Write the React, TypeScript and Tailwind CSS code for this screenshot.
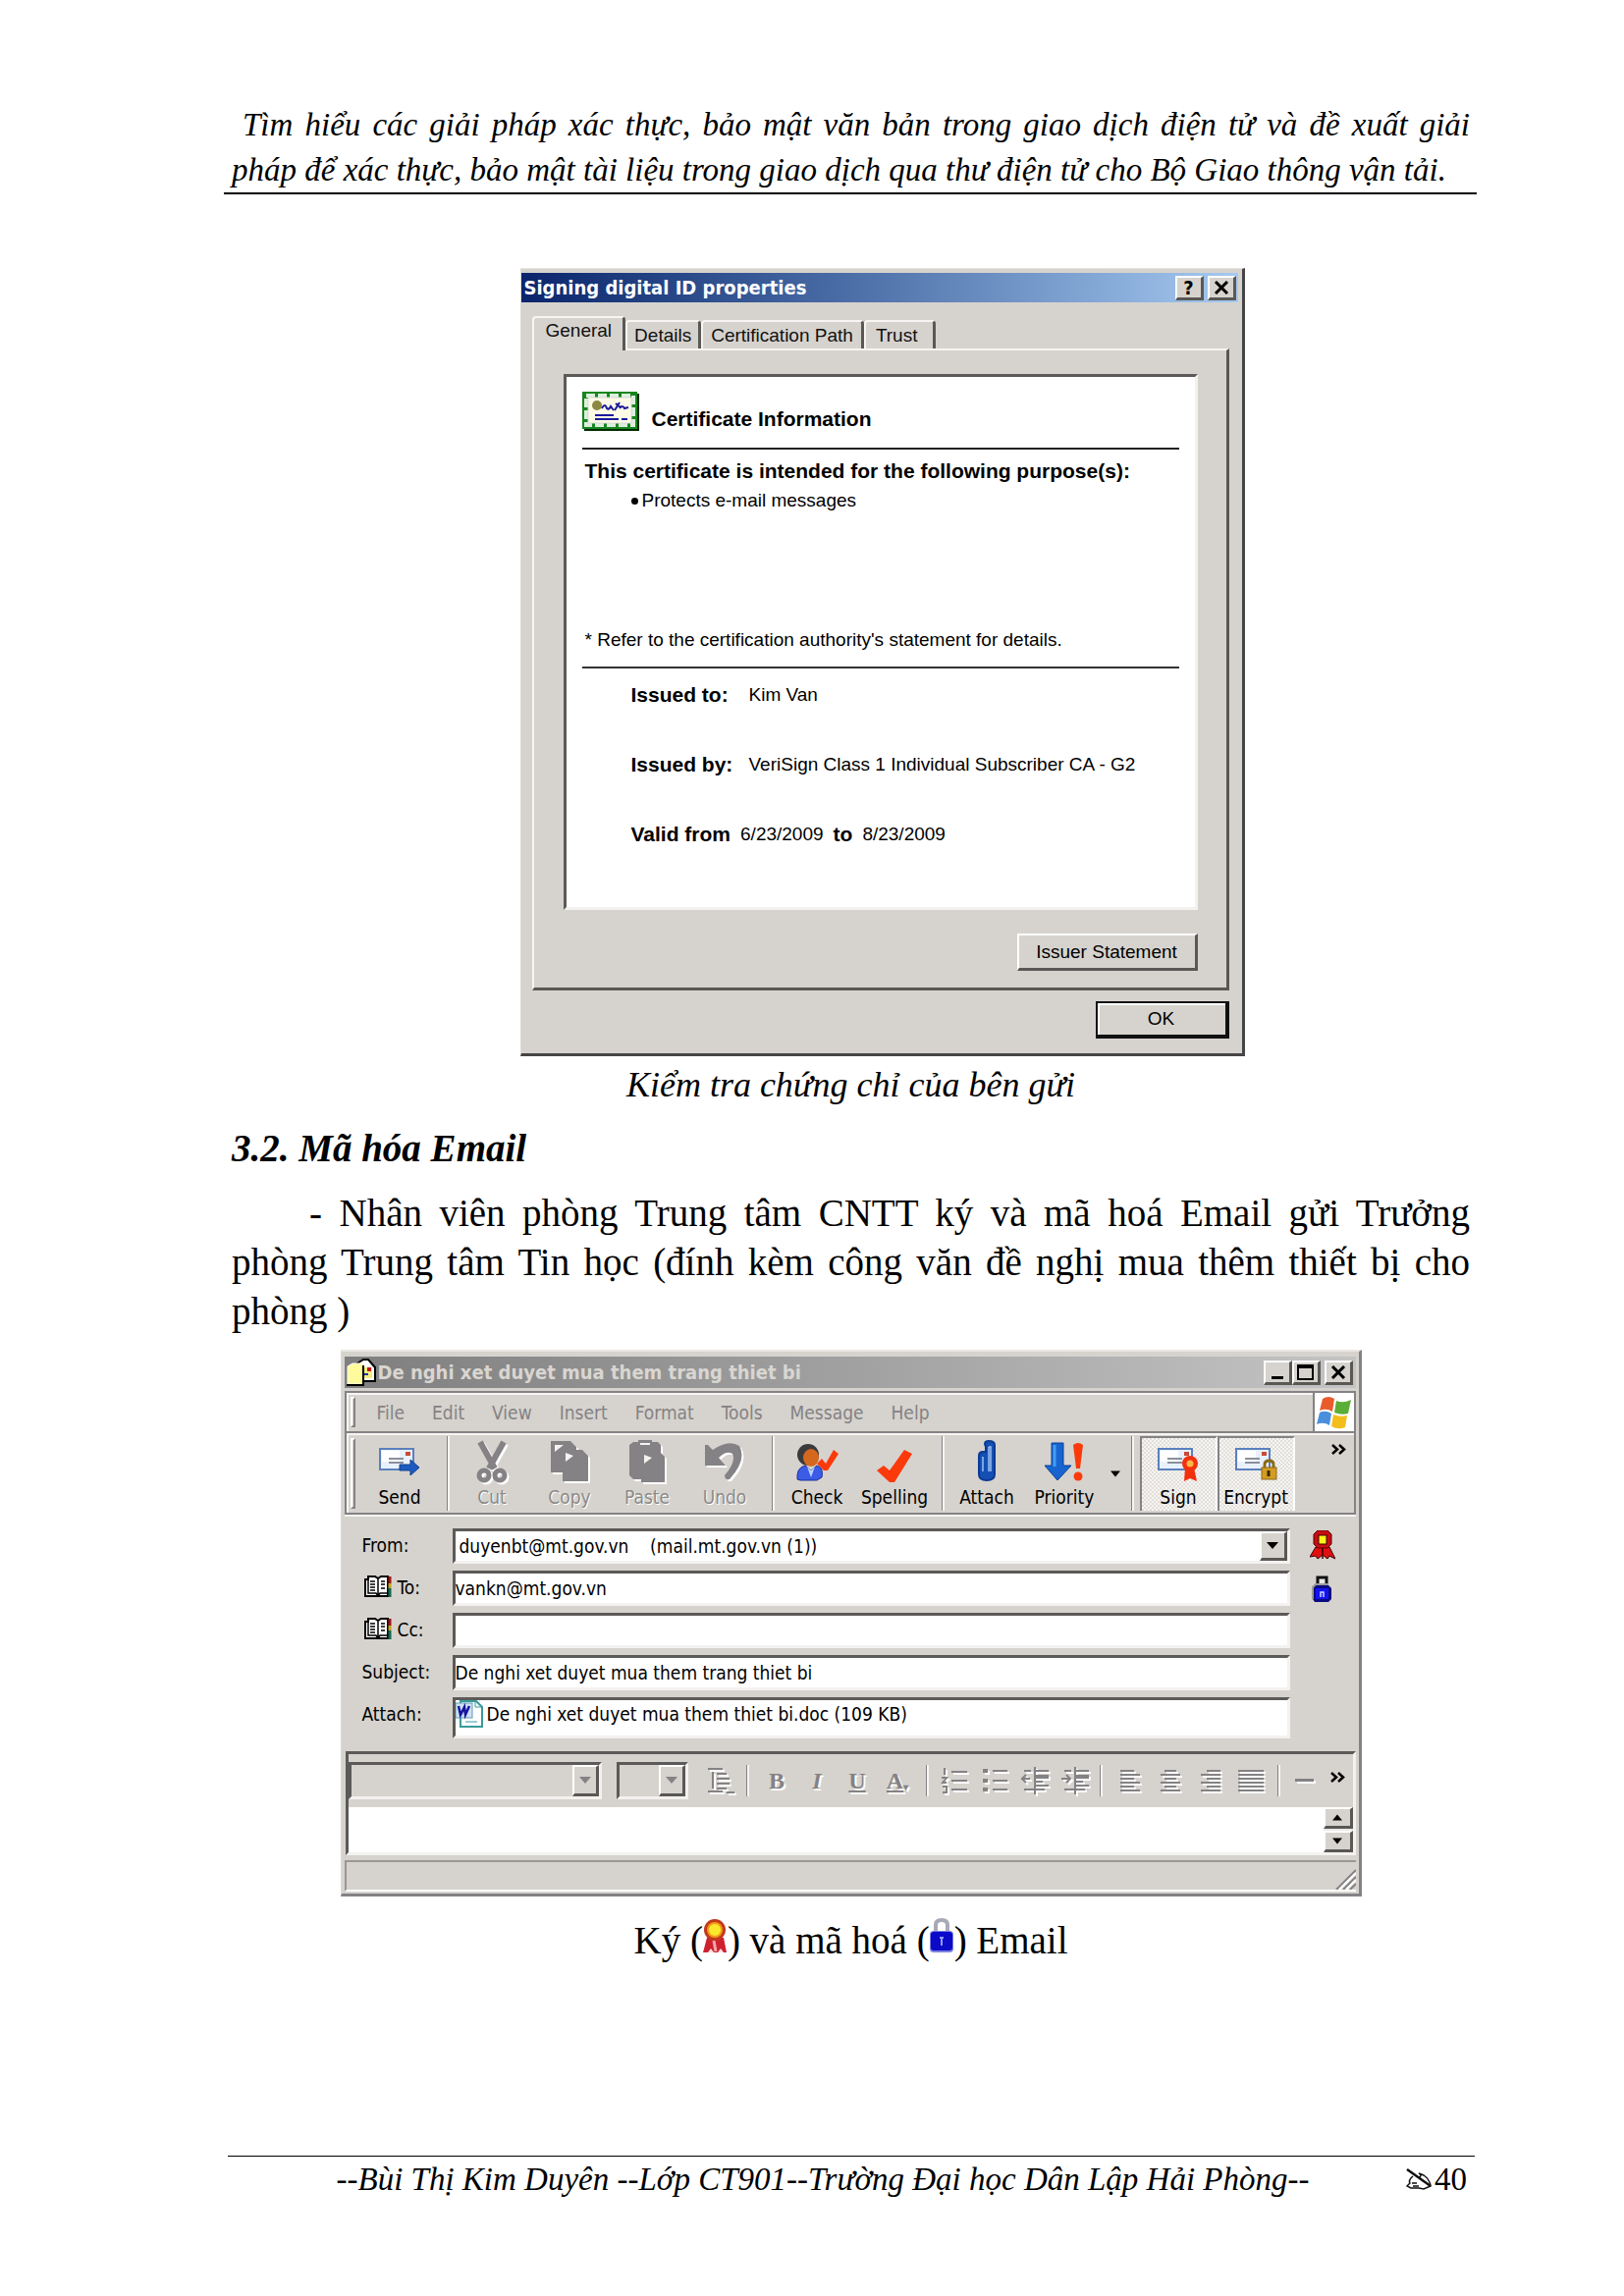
import React from "react";

const FACE = "bg-[#d6d3ce]";
const TAHOMA = "font-['DejaVu_Sans_Condensed','Noto_Sans',sans-serif]";
const RAISED =
  "bg-[#d6d3ce] border-t-2 border-l-2 border-t-white border-l-white border-r-[3px] border-b-[3px] border-r-[#5a5855] border-b-[#5a5855]";
const SUNKEN =
  "border-t-[3px] border-l-[3px] border-t-[#5c5a58] border-l-[#5c5a58] border-r-[3px] border-b-[3px] border-r-[#f3f2f0] border-b-[#f3f2f0]";

type Kids = { children?: React.ReactNode };

function CaptionButton({ label, children }: Kids & { label: string }) {
  return (
    <button aria-label={label} className={`${RAISED} flex h-[25px] w-[29px] items-center justify-center`}>
      {children}
    </button>
  );
}

function CrossGlyph() {
  return (
    <svg width="16" height="14" viewBox="0 0 16 14" stroke="#000" strokeWidth="3">
      <path d="M2 1 L14 13 M14 1 L2 13" />
    </svg>
  );
}

function CertificateIcon() {
  return (
    <svg width="58" height="40" viewBox="0 0 58 40">
      <rect x="2" y="2" width="56" height="38" fill="#002b00" />
      <rect x="0" y="0" width="56" height="38" fill="#17861f" />
      <rect x="4" y="4" width="48" height="30" fill="none" stroke="#dcefdc" strokeWidth="4" strokeDasharray="9 3" />
      <rect x="6" y="6" width="44" height="26" fill="#fdfbe6" stroke="#d8d8d8" />
      <circle cx="15" cy="14" r="5" fill="#8d8742" />
      <path d="M20 17 q3 -6 5 0 q2 2 4 -2 l3 4 M33 19 l5 -8 M34 12 l5 4 M38 17 q3 -4 5 0 l4 -1" fill="none" stroke="#1a1a9c" strokeWidth="2" />
      <path d="M13 24 h19 M13 28 h24 M40 28 h6" stroke="#1a1a9c" strokeWidth="2" />
    </svg>
  );
}

function CertField({ name, children }: Kids & { name: string }) {
  return (
    <div className="flex h-6">
      <dt className="w-[120px] text-[21px] font-bold">{name}</dt>
      <dd>{children}</dd>
    </div>
  );
}

function Tab({ active, className, children }: Kids & { active?: boolean; className: string }) {
  return (
    <button
      role="tab"
      aria-selected={!!active}
      className={`rounded-t-[4px] border-t-2 border-l-2 border-r-[3px] border-t-[#f6f5f3] border-l-[#f6f5f3] border-r-[#5a5855] leading-6 whitespace-nowrap ${
        active ? "-mb-[2px] h-[35px] bg-[#d6d3ce] pb-2" : "h-[29px]"
      } ${className}`}
    >
      {children}
    </button>
  );
}

function CertificateDialog() {
  return (
    <section
      aria-label="Signing digital ID properties"
      className={`${FACE} w-[738px] border-t border-r-[3px] border-b-[3px] border-l border-t-[#e6e3df] border-r-[#454545] border-b-[#454545] border-l-[#dedbd7] pt-1 font-['Liberation_Sans',sans-serif] text-[19px] leading-6 text-black`}
    >
      <header className="mr-1 flex h-[30px] items-center justify-between bg-linear-to-r from-[#0b246b] to-[#a6caf0] pr-0.5 pl-[3px]">
        <h2 className={`${TAHOMA} text-[20px] font-bold text-white`}>Signing digital ID properties</h2>
        <div className="flex gap-1">
          <CaptionButton label="Help">
            <span className={`${TAHOMA} text-[20px] leading-none font-bold`}>?</span>
          </CaptionButton>
          <CaptionButton label="Close">
            <CrossGlyph />
          </CaptionButton>
        </div>
      </header>

      <div className="mt-3 mr-[13px] ml-[11px]">
        <div role="tablist" className="flex h-[35px] items-end text-[#111]">
          <Tab active className="pr-[11px] pl-3">General</Tab>
          <Tab className="px-[7px]">Details</Tab>
          <Tab className="px-2">Certification Path</Tab>
          <Tab className="pr-4 pl-2.5">Trust</Tab>
        </div>
        <div className="border-t-2 border-r-[3px] border-b-[3px] border-l-2 border-t-[#f6f5f3] border-r-[#5a5855] border-b-[#5a5855] border-l-[#f6f5f3] pt-6 pr-[29px] pb-[17px] pl-[30px]">
          <div className={`${SUNKEN} bg-white px-4 pt-[15px] pb-[62px]`}>
            <div className="flex items-end gap-[13px]">
              <CertificateIcon />
              <h3 className="text-[21px] font-bold">Certificate Information</h3>
            </div>
            <hr className="mt-[17px] border-t-2 border-[#222]" />
            <p className="mt-2.5 pl-[3px] text-[21px] font-bold">This certificate is intended for the following purpose(s):</p>
            <ul className="mt-1.5 pl-[50px]">
              <li className="flex items-center gap-1">
                <span className="size-[7px] rounded-full bg-black" />
                Protects e-mail messages
              </li>
            </ul>
            <p className="mt-[118px] pl-[3px]">* Refer to the certification authority's statement for details.</p>
            <hr className="mt-[15px] border-t-2 border-[#333]" />
            <dl className="mt-[15px] flex flex-col gap-[47px] pl-[50px]">
              <CertField name="Issued to:">Kim Van</CertField>
              <CertField name="Issued by:">VeriSign Class 1 Individual Subscriber CA - G2</CertField>
              <div className="flex h-6 gap-2.5">
                <dt className="text-[21px] font-bold">Valid from</dt>
                <dd>6/23/2009</dd>
                <dt className="text-[21px] font-bold">to</dt>
                <dd>8/23/2009</dd>
              </div>
            </dl>
          </div>
          <div className="mt-6 flex justify-end">
            <button className={`${RAISED} h-[38px] w-[184px]`}>Issuer Statement</button>
          </div>
        </div>
        <div className="mt-[11px] mb-[15px] flex justify-end">
          <button className="h-[38px] w-[136px] border-2 border-r-[4px] border-b-[4px] border-[#111] bg-[#d6d3ce] shadow-[inset_2px_2px_0_#fff]">
            OK
          </button>
        </div>
      </div>
    </section>
  );
}

/* ---- mail window drawings ---- */

function MailTitleIcon() {
  return (
    <svg width="30" height="28" viewBox="0 0 30 28">
      <path d="M11 5 L17 1 H22 L29 9 V23 H11 Z" fill="#fff" stroke="#000" strokeWidth="2" />
      <path d="M17 9 h9 v11 h-9 z" fill="#f5ee7c" />
      <rect x="21" y="9" width="4" height="4" fill="#c01818" />
      <path d="M17 16 h5" stroke="#1d2fb5" strokeWidth="2" />
      <path d="M1 8 L6 5 H17 V26 H1 Z" fill="#fdfb9c" stroke="#fff" />
      <path d="M0 27 H17 V7" fill="none" stroke="#000" strokeWidth="2" />
    </svg>
  );
}

function WindowsFlag() {
  return (
    <svg width="36" height="34" viewBox="0 0 36 34">
      <path d="M6 3 Q12 -1 18 3 L16 16 Q10 12 3 15 Z" fill="#ea5b2c" />
      <path d="M20 5 Q27 8 35 4 L32 18 Q25 20 18 17 Z" fill="#5aae35" />
      <path d="M3 17 Q9 14 15 18 L13 30 Q7 26 0 29 Z" fill="#4a8fdc" />
      <path d="M17 19 Q24 22 31 20 L29 32 Q22 35 15 31 Z" fill="#f3be1c" />
    </svg>
  );
}

function Envelope() {
  return (
    <>
      <rect x="2" y="9" width="34" height="21" fill="#e9f1fc" stroke="#5b80bd" strokeWidth="2" />
      <rect x="4" y="11" width="18" height="11" fill="#fff" />
      <path d="M11 19 h15 M11 23 h15" stroke="#8a8f9c" strokeWidth="2" />
      <rect x="28" y="12" width="5" height="4" fill="#c94a35" />
    </>
  );
}

function SendIcon() {
  return (
    <svg width="44" height="44" viewBox="0 0 44 44">
      <Envelope />
      <path d="M22 25 H33 V20 L42 28 L33 36 V31 H22 Z" fill="#1c5cc0" stroke="#123f8f" />
    </svg>
  );
}

function CutIcon() {
  return (
    <svg width="32" height="44" viewBox="0 0 32 44" fill="none" stroke="#848284">
      <path d="M4 2 L19 29 M28 2 L13 29" strokeWidth="6" />
      <circle cx="8" cy="36" r="5" strokeWidth="5" />
      <circle cx="24" cy="36" r="5" strokeWidth="5" />
    </svg>
  );
}

function CopyIcon() {
  return (
    <svg width="38" height="44" viewBox="0 0 38 44" fill="#848284">
      <path d="M0 1 H20 L26 7 V10 H32 L38 16 V42 H12 V33 H0 Z" />
      <path d="M4 5 h9 l-9 7 z M15 13 v9 l8 -6 z" fill="#f4f3f1" />
    </svg>
  );
}

function PasteIcon() {
  return (
    <svg width="36" height="44" viewBox="0 0 36 44" fill="#848284">
      <path d="M0 5 L4 2 H9 V0 H23 V2 H29 L32 5 V13 L36 17 V43 H12 V40 H4 L0 36 Z" />
      <path d="M11 4 h10" stroke="#f4f3f1" strokeWidth="2" />
      <path d="M15 15 v9 l8 -6 z" fill="#f4f3f1" />
    </svg>
  );
}

function UndoIcon() {
  return (
    <svg width="40" height="44" viewBox="0 0 40 44">
      <path d="M0 5 H3 L8 10 Q24 -1 35 6 Q43 20 25 40 Q20 41 20 36 Q32 22 28 14 Q22 10 14 18 L21 26 H0 Z" fill="#848284" />
    </svg>
  );
}

function CheckIcon() {
  return (
    <svg width="44" height="44" viewBox="0 0 44 44">
      <path d="M22 24 L27 19 L31 24 L39 10 L44 14 L33 31 H29 Z" fill="#fb3a0c" />
      <circle cx="13" cy="15" r="11" fill="#3a3a3c" />
      <ellipse cx="16" cy="18" rx="8" ry="9" fill="#d4681f" />
      <path d="M2 40 Q1 28 10 26 L16 31 L22 26 Q29 28 27 38 L22 41 H5 Z" fill="#3c5ce6" stroke="#1c2f9c" />
      <path d="M12 27 L16 38 L20 27 L16 31 Z" fill="#b9d4fb" />
    </svg>
  );
}

function SpellingIcon() {
  return (
    <svg width="38" height="44" viewBox="0 0 38 44">
      <path d="M1 31 L8 26 L14 31 L29 10 L37 14 L19 43 H14 Z" fill="#fb3a0c" />
    </svg>
  );
}

function AttachIcon() {
  return (
    <svg width="20" height="44" viewBox="0 0 20 44" fill="none">
      <path d="M8 4 Q8 1 12 1 Q18 1 18 5 V35 Q18 41 10 41 Q2 41 2 35 V16 Q2 12 6 12 H9 V7 Z" fill="#1450b4" stroke="#0c3a92" strokeWidth="2" />
      <path d="M12 7 V32 M12 7 h2 V32 M6 17 V32" stroke="#9cc1f2" strokeWidth="1.5" />
    </svg>
  );
}

function PriorityIcon() {
  return (
    <svg width="40" height="44" viewBox="0 0 40 44">
      <path d="M7 3 H19 V26 H27 L13 41 L0 26 H7 Z" fill="#1764cf" stroke="#0d3f99" />
      <path d="M10 5 V27" stroke="#3fa0f0" strokeWidth="3" />
      <path d="M29 5 Q34 1 39 5 L36 29 H32 Z" fill="#fb3a0c" />
      <circle cx="34" cy="37" r="4.500" fill="#fb3a0c" />
    </svg>
  );
}

function SignIcon() {
  return (
    <svg width="44" height="44" viewBox="0 0 44 44">
      <Envelope />
      <path d="M29 28 L28 42 L34 39 L41 42 L38 28 Z" fill="#f2300e" />
      <circle cx="34" cy="24" r="8" fill="#f2300e" />
      <circle cx="34" cy="24" r="3.500" fill="#fcb64a" />
    </svg>
  );
}

function EncryptIcon() {
  return (
    <svg width="44" height="44" viewBox="0 0 44 44">
      <Envelope />
      <path d="M31 29 V25 Q31 21 35.500 21 Q40 21 40 25 V29" fill="none" stroke="#8b6a17" strokeWidth="3" />
      <rect x="28" y="28" width="15" height="12" fill="#d49c22" stroke="#8b6a17" />
      <path d="M35 31 v6" stroke="#3a2a00" strokeWidth="3" />
    </svg>
  );
}

function BookIcon() {
  return (
    <svg width="28" height="23" viewBox="0 0 28 23">
      <path d="M1 4 H4 V1 H11 L14 3 L17 1 H24 V21 H1 Z" fill="#fff" stroke="#000" strokeWidth="2" />
      <path d="M4 4 V18 H12 L14 21 L16 18 H23 M14 4 V20 M6 6 h5 M6 9 h5 M6 12 h5 M6 15 h5 M17 9 h4 M17 6 h4 M17 13 h4" fill="none" stroke="#000" strokeWidth="1.500" />
      <path d="M26 1 V8" stroke="#a01414" strokeWidth="3" />
      <path d="M26 8 V13" stroke="#c4a21a" strokeWidth="3" />
      <path d="M26 13 V22" stroke="#0f6a50" strokeWidth="3" />
    </svg>
  );
}

function WordDocIcon() {
  return (
    <svg width="28" height="28" viewBox="0 0 28 28">
      <path d="M5 1 H21 L27 7 V27 H5 Z" fill="#fff" stroke="#3a9a9a" strokeWidth="2" />
      <path d="M20 1 V7 H27 M10 22 h12" fill="none" stroke="#3a9a9a" />
      <rect x="0" y="3" width="17" height="15" fill="#cfe0f2" stroke="#5f9fb5" />
      <path d="M3 6 L5 15 L9 7 L10 15 L14 6" fill="none" stroke="#15159c" strokeWidth="2.500" />
    </svg>
  );
}

function RibbonSeal() {
  return (
    <svg width="26" height="30" viewBox="0 0 26 30">
      <path d="M6 17 L0 27 L6 26 L8 29 L13 25 L18 29 L20 26 L26 29 L20 17 Z" fill="#e01010" stroke="#3a0000" />
      <path d="M8 0 H18 L22 4 V14 L18 18 H8 L4 14 V4 Z" fill="#c80d14" stroke="#5a0000" />
      <rect x="9" y="5" width="8" height="9" fill="#fbf21c" stroke="#3a0000" />
      <path d="M13 18 V29" stroke="#3a0000" strokeWidth="1.500" />
    </svg>
  );
}

function BluePadlock() {
  return (
    <svg width="21" height="27" viewBox="0 0 21 27">
      <path d="M6 12 V2 H15 V12" fill="#e8e8e8" stroke="#111" strokeWidth="3" />
      <path d="M3 10 H17 L20 13 V24 L17 27 H3 L1 24 V12 Z" fill="#0a0a80" />
      <path d="M1 24 V12 L4 9 H17" fill="none" stroke="#9a9a9a" strokeWidth="2" />
      <rect x="4" y="13" width="13" height="11" fill="#1212f0" />
      <path d="M9 22 V17 H12 V22" fill="none" stroke="#c9d4ff" strokeWidth="1.500" />
    </svg>
  );
}

function InlineSeal() {
  return (
    <svg className="inline-block align-baseline" width="25" height="36" viewBox="0 0 25 36">
      <path d="M4 20 L0 35 H24 L21 20 Z" fill="#cf2030" />
      <path d="M11 23 L13 34" stroke="#f2a5a5" strokeWidth="3" />
      <path d="M5 35 L8 31 L11 35 M15 35 L18 31 L21 35" fill="#fbe3e3" />
      <circle cx="12" cy="12" r="11" fill="#c23a1c" />
      <circle cx="12" cy="12" r="8" fill="#f59a1a" />
      <circle cx="12" cy="12" r="6" fill="#fbe92c" />
    </svg>
  );
}

function InlinePadlock() {
  return (
    <svg className="inline-block align-baseline" width="25" height="36" viewBox="0 0 25 36">
      <path d="M6 15 V7 Q6 2 12 2 Q18 2 18 7 V15" fill="none" stroke="#a9a9b8" strokeWidth="4" />
      <rect x="0" y="13" width="24" height="22" rx="4" fill="#7c80e0" />
      <rect x="1" y="14" width="22" height="19" rx="3" fill="#0a0ac8" />
      <path d="M12 19 V28 M10 20 h4" stroke="#8f9bf5" strokeWidth="2" />
    </svg>
  );
}

function Triangle({ up, color = "#000" }: { up?: boolean; color?: string }) {
  return (
    <svg width="12" height="7" viewBox="0 0 12 7">
      <path d={up ? "M0 7 H12 L6 0 Z" : "M0 0 H12 L6 7 Z"} fill={color} />
    </svg>
  );
}

function Chevrons() {
  return (
    <svg width="15" height="11" viewBox="0 0 15 11" fill="none" stroke="#000" strokeWidth="2.500">
      <path d="M1 1 L6 5.500 L1 10 M8 1 L13 5.500 L8 10" />
    </svg>
  );
}

function Separator({ className = "" }: { className?: string }) {
  return <span className={`w-[3px] shrink-0 border-r-2 border-l border-l-[#848284] border-r-[#f6f5f3] ${className}`} />;
}

function Grip() {
  return <span className="w-[5px] shrink-0 self-stretch border-t-2 border-r-2 border-b-2 border-l-2 border-white border-r-[#848284] border-b-[#848284]" />;
}

function Tool({ label, disabled, pressed, children }: Kids & { label: string; disabled?: boolean; pressed?: boolean }) {
  const state = disabled
    ? "text-[#8c8a88] [text-shadow:1px_1px_0_#fff] [&>svg]:drop-shadow-[2px_2px_0_#fff]"
    : pressed
      ? "border-t-2 border-l-2 border-r-2 border-t-[#848284] border-l-[#848284] border-r-white bg-[repeating-conic-gradient(#f6f5f3_0_25%,#e2dfdb_0_50%)] bg-[length:4px_4px]"
      : "";
  return (
    <button disabled={disabled} aria-pressed={pressed} className={`flex w-[79px] shrink-0 flex-col items-center justify-end gap-0.5 pb-0.5 leading-6 ${state}`}>
      {children}
      {label}
    </button>
  );
}

function AddressRow({ id, label, book, children }: Kids & { id: string; label: string; book?: boolean }) {
  return (
    <div className="flex">
      <label htmlFor={id} className="flex h-[33px] w-[92px] shrink-0 items-center gap-1.5">
        {book && <span className="ml-0.5"><BookIcon /></span>}
        {label}
      </label>
      {children}
    </div>
  );
}

const FIELD = `${SUNKEN} block h-9 w-full bg-white`;

function EmptyCombo({ label, className }: { label: string; className: string }) {
  return (
    <span className={`${SUNKEN} ${FACE} relative block h-[38px] shrink-0 ${className}`}>
      <select aria-label={label} disabled className="block h-full w-full appearance-none" />
      <span className={`${RAISED} pointer-events-none absolute inset-y-0 right-0 flex w-[27px] items-center justify-center`}>
        <Triangle color="#848284" />
      </span>
    </span>
  );
}

function FormatButton({ label, d, children }: Kids & { label: string; d?: string }) {
  return (
    <button disabled aria-label={label} className="flex w-[41px] shrink-0 items-center justify-center font-['Liberation_Serif',serif] text-[24px] leading-none font-bold text-[#848284] [text-shadow:2px_2px_0_#fff]">
      {d ? (
        <svg width="28" height="28" viewBox="0 0 28 28" fill="none" stroke="#848284" strokeWidth="2" className="drop-shadow-[2px_2px_0_#fff]">
          <path d={d} />
        </svg>
      ) : (
        children
      )}
    </button>
  );
}

const MENUS = ["File", "Edit", "View", "Insert", "Format", "Tools", "Message", "Help"];

function MailWindow() {
  return (
    <section
      aria-label="De nghi xet duyet mua them trang thiet bi"
      className={`${FACE} ${TAHOMA} w-[1040px] border-t-2 border-r-[3px] border-b-[3px] border-l border-t-[#e9e7e3] border-r-[#848284] border-b-[#848284] border-l-[#dedbd7] px-[3px] pt-[5px] text-[19px] leading-6 text-black`}
    >
      <header className="flex h-8 items-center justify-between bg-linear-to-r from-[#7f7f7f] to-[#c4c4c4] pr-[3px] pl-0.5">
        <h2 className="flex items-center gap-0.5 text-[20px] font-bold text-[#d9d6d1]">
          <MailTitleIcon />
          De nghi xet duyet mua them trang thiet bi
        </h2>
        <div className="flex">
          <CaptionButton label="Minimize">
            <span className="mt-3 h-[3px] w-3 bg-black" />
          </CaptionButton>
          <CaptionButton label="Maximize">
            <span className="h-4 w-[17px] border-2 border-t-4 border-black" />
          </CaptionButton>
          <span className="w-1" />
          <CaptionButton label="Close">
            <CrossGlyph />
          </CaptionButton>
        </div>
      </header>

      <div className="mt-[3px] border-2 border-[#848284] shadow-[inset_2px_2px_0_#f6f5f3,0_2px_0_#f6f5f3]">
        <nav className="flex h-[41px] items-stretch border-b-2 border-[#848284] pl-1">
          <div className="flex py-1"><Grip /></div>
          <div className="ml-[22px] flex flex-1 items-center gap-[28px] text-[#848284]">
            {MENUS.map((m) => (
              <button key={m}>{m}</button>
            ))}
          </div>
          <span className="flex w-[42px] items-center justify-center border-l-2 border-[#848284] bg-white">
            <WindowsFlag />
          </span>
        </nav>
        <div className="flex h-[81px] border-t-2 border-[#f6f5f3] pt-px pb-0.5 pl-1">
          <div className="flex py-0.5"><Grip /></div>
          <div className="flex pl-1.5">
            <Tool label="Send"><SendIcon /></Tool>
            <Separator className="mr-1 ml-2" />
            <Tool label="Cut" disabled><CutIcon /></Tool>
            <Tool label="Copy" disabled><CopyIcon /></Tool>
            <Tool label="Paste" disabled><PasteIcon /></Tool>
            <Tool label="Undo" disabled><UndoIcon /></Tool>
            <Separator className="mr-1 ml-2" />
            <Tool label="Check"><CheckIcon /></Tool>
            <Tool label="Spelling"><SpellingIcon /></Tool>
            <Separator className="mr-1 ml-2" />
            <Tool label="Attach"><AttachIcon /></Tool>
            <Tool label="Priority"><PriorityIcon /></Tool>
            <button aria-label="Priority options" className="flex w-6 items-center justify-center [&>svg]:w-2.5">
              <Triangle />
            </button>
            <Separator className="mr-1.5 ml-1" />
            <Tool label="Sign" pressed><SignIcon /></Tool>
            <Tool label="Encrypt" pressed><EncryptIcon /></Tool>
          </div>
          <button aria-label="More tools" className="mt-2 mr-2 ml-auto self-start"><Chevrons /></button>
        </div>
      </div>

      <form className="flex gap-5 pt-[14px] pl-[18px]">
        <div className="flex w-[945px] flex-col gap-[7px]">
          <AddressRow id="from" label="From:">
            <div className="relative w-full">
              <select id="from" className={`${FIELD} appearance-none pl-1`}>
                <option>duyenbt@mt.gov.vn{"\u00a0\u00a0\u00a0"} (mail.mt.gov.vn (1))</option>
              </select>
              <span className={`${RAISED} pointer-events-none absolute top-[3px] right-[3px] bottom-[3px] flex w-7 items-center justify-center`}>
                <Triangle />
              </span>
            </div>
          </AddressRow>
          <AddressRow id="to" label="To:" book>
            <input id="to" className={FIELD} defaultValue="vankn@mt.gov.vn" />
          </AddressRow>
          <AddressRow id="cc" label="Cc:" book>
            <input id="cc" className={FIELD} />
          </AddressRow>
          <AddressRow id="subject" label="Subject:">
            <input id="subject" className={FIELD} defaultValue="De nghi xet duyet mua them trang thiet bi" />
          </AddressRow>
          <AddressRow id="attach" label="Attach:">
            <div className={`${SUNKEN} flex h-[42px] w-full bg-white`}>
              <WordDocIcon />
              <input id="attach" className="h-[27px] flex-1 pl-1" readOnly value="De nghi xet duyet mua them thiet bi.doc (109 KB)" />
            </div>
          </AddressRow>
        </div>
        <div className="flex flex-col items-center gap-4 pt-0.5">
          <RibbonSeal />
          <BluePadlock />
        </div>
      </form>

      <div className={`${SUNKEN} mt-[13px] ml-px`}>
        <div className="flex h-[54px] items-center">
          <EmptyCombo label="Font" className="w-[258px]" />
          <EmptyCombo label="Font size" className="ml-[15px] w-[73px]" />
          <span className="w-[14px]" />
          <FormatButton label="Paragraph style" d="M0 2 H15 M0 25 H15 M5 5 V22 M9 7 H19 M9 12 H22 M9 17 H22 M9 22 H19 M19 26 H27" />
          <Separator className="mr-2 ml-1 h-8" />
          <FormatButton label="Bold">B</FormatButton>
          <FormatButton label="Italic"><span className="italic">I</span></FormatButton>
          <FormatButton label="Underline"><span className="underline">U</span></FormatButton>
          <FormatButton label="Font color"><span className="underline">A</span><span className="self-end text-[10px]">▾</span></FormatButton>
          <Separator className="mr-1.5 ml-2 h-8" />
          <FormatButton label="Numbered list" d="M4 1 V8 M1 11 H6 L2 16 H6 M2 20 H6 V26 H2 M11 5 H27 M11 14 H27 M11 23 H27" />
          <FormatButton label="Bulleted list" d="M2 3 H7 M2 5 H7 M2 13 H7 M2 15 H7 M2 22 H7 M2 24 H7 M12 4 H27 M12 14 H27 M12 23 H27" />
          <FormatButton label="Decrease indent" d="M3 4 H10 M13 4 H28 M13 9 H28 M13 11 H28 M13 15 H22 M13 19 H28 M3 23 H24 M14 0 V28 M0 12 H9 M5 8 L1 12 L5 16" />
          <FormatButton label="Increase indent" d="M3 4 H10 M13 4 H28 M13 9 H28 M13 11 H28 M13 15 H22 M13 19 H28 M3 23 H24 M14 0 V28 M0 12 H9 M5 8 L9 12 L5 16" />
          <Separator className="mr-2 ml-1 h-8" />
          <FormatButton label="Align left" d="M4 4 H18 M4 8 H24 M4 12 H18 M4 16 H24 M4 20 H18 M4 24 H24" />
          <FormatButton label="Center" d="M8 4 H20 M4 8 H24 M8 12 H20 M4 16 H24 M8 20 H20 M4 24 H24" />
          <FormatButton label="Align right" d="M10 4 H24 M4 8 H24 M10 12 H24 M4 16 H24 M10 20 H24 M4 24 H24" />
          <FormatButton label="Justify" d="M1 4 H27 M1 8 H27 M1 12 H27 M1 16 H27 M1 20 H27 M1 24 H27" />
          <Separator className="mr-2 ml-1.5 h-8" />
          <FormatButton label="Horizontal line" d="M1 13 H20 M1 14 H20" />
          <button aria-label="More formatting" className="mr-2 mb-2 ml-auto"><Chevrons /></button>
        </div>
        <div className="flex h-[46px] bg-white">
          <textarea aria-label="Message body" className="flex-1 resize-none" />
          <div className="flex w-[30px] flex-col justify-between bg-[#ebe9e6]">
            <button aria-label="Scroll up" className={`${RAISED} flex h-[22px] items-center justify-center [&>svg]:w-2.5`}><Triangle up /></button>
            <button aria-label="Scroll down" className={`${RAISED} flex h-[22px] items-center justify-center [&>svg]:w-2.5`}><Triangle /></button>
          </div>
        </div>
      </div>

      <footer className="mt-[5px] mb-0.5 flex h-8 items-end justify-end border-t-2 border-b-2 border-l-2 border-[#9a9794] border-b-white">
        <svg width="21" height="21" viewBox="0 0 21 21" stroke="#848284" strokeWidth="2">
          <path d="M1 21 L21 1 M8 21 L21 8 M15 21 L21 15" />
          <path d="M4 21 L21 4 M11 21 L21 11" stroke="#fff" />
        </svg>
      </footer>
    </section>
  );
}

function WritingHand() {
  return (
    <svg width="28" height="22" viewBox="0 0 28 22" fill="none" stroke="#111" strokeWidth="1.500">
      <path d="M1 1 L25 18" strokeWidth="2.500" />
      <path d="M7 8 Q2 12 4 15 L1 18 L5 20 H13 L18 21 L25 18 Q24 11 18 7 L13 5 Q17 8 13 9 M6 15 h5 M7 18 h6" />
    </svg>
  );
}

export default function App() {
  return (
    <div className="flex min-h-screen flex-col bg-white pt-[104px] pr-[157px] pb-24 pl-[236px] font-['Liberation_Serif',serif] text-[39px] leading-[50px] text-black">
      <header className="-mr-[7px] -ml-2 border-b-2 border-black pr-[7px] pl-2">
        <p className="indent-[11px] text-justify text-[33px] leading-[46px] italic">
          Tìm hiểu các giải pháp xác thực, bảo mật văn bản trong giao dịch điện tử và đề xuất giải pháp để xác thực, bảo
          mật tài liệu trong giao dịch qua thư điện tử cho Bộ Giao thông vận tải.
        </p>
      </header>

      <main>
        <figure className="mt-[75px]">
          <div className="flex justify-center pl-16">
            <CertificateDialog />
          </div>
          <figcaption className="mt-1 text-center text-[36px] italic">Kiểm tra chứng chỉ của bên gửi</figcaption>
        </figure>

        <h1 className="mt-[15px] font-bold italic">3.2. Mã hóa Email</h1>
        <p className="mt-4 indent-[79px] text-justify">
          - Nhân viên phòng Trung tâm CNTT ký và mã hoá Email gửi Trưởng phòng Trung tâm Tin học (đính kèm công văn đề
          nghị mua thêm thiết bị cho phòng )
        </p>

        <figure className="mt-[14px]">
          <div className="flex justify-center">
            <MailWindow />
          </div>
          <figcaption className="mt-5 text-center">
            Ký (<InlineSeal />) và mã hoá (<InlinePadlock />) Email
          </figcaption>
        </figure>
      </main>

      <footer className="mt-auto -mr-[5px] -ml-1 flex border-t border-black pr-2 text-[33px] leading-[46px]">
        <p className="flex-1 pl-3 text-center italic">--Bùi Thị Kim Duyên --Lớp CT901--Trường Đại học Dân Lập Hải Phòng--</p>
        <p className="flex items-center gap-px">
          <WritingHand />
          40
        </p>
      </footer>
    </div>
  );
}
